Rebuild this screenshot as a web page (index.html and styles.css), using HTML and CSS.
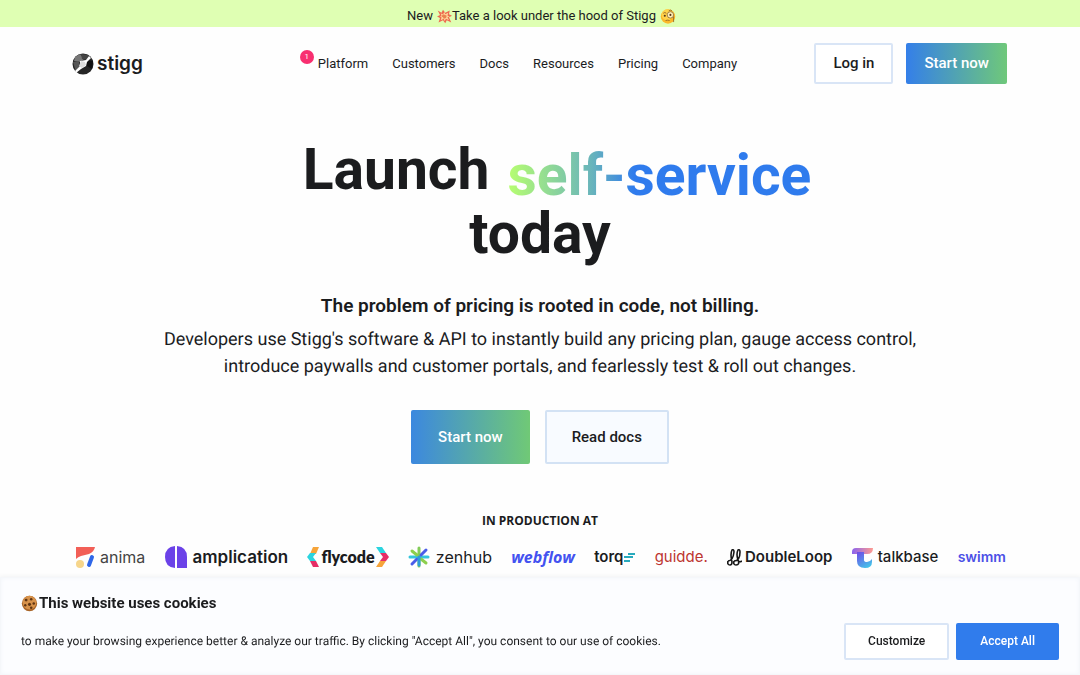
FILE: index.html
```html
<!DOCTYPE html>
<html lang="en">
<head>
<meta charset="utf-8">
<meta name="viewport" content="width=device-width, initial-scale=1">
<title>Stigg</title>
<link rel="stylesheet" href="styles.css">
</head>
<body>
<div class="banner">
  <span>New</span>
  <svg class="emoji emoji-boom" viewBox="0 0 20 20" aria-hidden="true"><path fill="#ee6a50" d="M1 2l5 3 2-4 3 4 6-3-1 5 4 2-4 2 3 7-6-3-2 4-3-4-6 3 2-6-4-2 4-2z"/><path fill="#ffd59a" d="M5 6l3 1 2-3 1 3 4-2-1 4 3 1-3 1 2 4-4-2-2 3-1-3-4 2 1-4-2-1 2-1z"/><path fill="#e9824f" d="M8 7l3 1 2 1-1 3-3 1-1-2-2-1z"/></svg>
  <a class="banner-link" href="#">Take a look under the hood of Stigg</a>
  <svg class="emoji emoji-face" viewBox="0 0 20 20" aria-hidden="true"><circle cx="10" cy="10" r="9" fill="#fbb829"/><circle cx="9" cy="8" r="7" fill="#ffd34a"/><circle cx="13" cy="8" r="4" fill="#fff0b8" stroke="#8b6b35"/><circle cx="13" cy="8" r="1.3" fill="#573718"/><circle cx="6" cy="9" r="1.3" fill="#573718"/><path d="M4 6q2-2 4 0M11 3q2-2 4 0M7 15q3-1 5 0M17 10v7" stroke="#8b5a20" fill="none"/></svg>
</div>

<header class="header">
  <a class="brand" href="#">
    <svg class="brand-mark" viewBox="0 0 22 22" aria-hidden="true"><circle cx="11" cy="11" r="10.5" fill="#252525"/><path d="M3 4l5-3 4 5-4 3-6-1z" fill="#777"/><path d="M9 1l8 1-2 5-5-1z" fill="#444"/><path d="M1 9l6-1 1 7-4 4z" fill="#555"/><path d="M14 7l7 1-1 8-5-3z" fill="#111"/><path d="M8 8l6-1 3-4 2 2-4 4-1 4-5 3-5 4-1-2 5-5z" fill="#fff"/><path d="M9 8l4 1 1 3-4 3-3-2z" fill="#ddd"/></svg>
    <span>stigg</span>
  </a>
  <nav class="nav">
    <a class="nav-link" href="#"><span class="nav-badge">1</span>Platform</a>
    <a class="nav-link" href="#">Customers</a>
    <a class="nav-link" href="#">Docs</a>
    <a class="nav-link" href="#">Resources</a>
    <a class="nav-link" href="#">Pricing</a>
    <a class="nav-link" href="#">Company</a>
  </nav>
  <div class="header-actions">
    <button class="button button-outline" type="button">Log in</button>
    <button class="button button-gradient" type="button">Start now</button>
  </div>
</header>

<main class="hero">
  <h1 class="title"><span class="title-line"><span>Launch</span> <span class="title-accent">self-service</span></span> <span>today</span></h1>
  <h2 class="subtitle">The problem of pricing is rooted in code, not billing.</h2>
  <p class="lead">Developers use Stigg's software &amp; API to instantly build any pricing plan, gauge access control, introduce paywalls and customer portals, and fearlessly test &amp; roll out changes.</p>
  <div class="hero-actions">
    <button class="button button-large button-gradient" type="button">Start now</button>
    <button class="button button-large button-soft" type="button">Read docs</button>
  </div>
  <h3 class="customers-title">IN PRODUCTION AT</h3>
</main>

<section class="customers" aria-label="Customers">
  <div class="logo logo-anima"><svg width="20" height="22" viewBox="0 0 20 22" aria-hidden="true"><path d="M0 1h19q-1 5-6 7-4 1-8 2-3 1-5 3z" fill="#f25f57"/><circle cx="4" cy="18" r="4" fill="#f6d58a"/><path d="M13 19l3-8" stroke="#2f67e8" stroke-width="4" stroke-linecap="round"/></svg><span>anima</span></div>
  <div class="logo logo-amplication"><svg width="22" height="22" viewBox="0 0 22 22" aria-hidden="true"><path d="M10 0v22Q0 21 0 11T10 0zM12 0q10 1 10 11v11H12z" fill="#6b42e8"/></svg><span>amplication</span></div>
  <div class="logo logo-flycode"><svg width="13" height="20" viewBox="0 0 13 20" aria-hidden="true"><path d="M6 0h6L9 7H3z" fill="#f6a43a"/><path d="M3 6h6l-3 4 3 4H3L0 10z" fill="#2bd4df"/><path d="M3 14h6l3 6H6z" fill="#e62d66"/></svg><span>flycode</span><svg width="13" height="20" viewBox="0 0 13 20" aria-hidden="true"><path d="M0 0h6l4 6H4z" fill="#2bd4df"/><path d="M4 6h6l3 4-3 4H4l3-4z" fill="#e62d66"/><path d="M4 14h6l-4 6H0z" fill="#f6a43a"/></svg></div>
  <div class="logo logo-zenhub"><svg width="22" height="22" viewBox="0 0 22 22" aria-hidden="true"><g stroke-width="3" stroke-linecap="round"><path d="M11 2v8M11 12v8" stroke="#83cc58"/><path d="M2 11h7M13 11h7" stroke="#34c5dc"/><path d="M4 5l5 4M13 13l5 4" stroke="#8ccf4d"/><path d="M18 4l-5 5M9 13l-5 5" stroke="#4a5de8"/><path d="M11 11v8" stroke="#2d9cdb"/></g></svg><span>zenhub</span></div>
  <div class="logo logo-webflow"><span>webflow</span></div>
  <div class="logo logo-torq"><span>torq</span><svg width="12" height="12" viewBox="0 0 12 12" aria-hidden="true"><path d="M5 3h7M1 6h9M1 10h6" stroke="#28aabd" stroke-width="2"/></svg></div>
  <div class="logo logo-guidde"><span>guidde.</span></div>
  <div class="logo logo-doubleloop"><svg width="15" height="17" viewBox="0 0 15 17" fill="none" stroke="#161616" stroke-width="1.6" aria-hidden="true"><path d="M1 12q5 0 6-9 0-3-2-2-2 4 0 12 0 3-2 3-3 0-2-4M7 12q6 0 6-9 0-3-2-2-2 4 0 10 2 5-2 5-3 0-2-4M11 11q1 3 4 1"/></svg><span>DoubleLoop</span></div>
  <div class="logo logo-talkbase"><svg width="21" height="21" viewBox="0 0 21 21" aria-hidden="true"><defs><linearGradient id="talkbase-top"><stop stop-color="#8b62ee"/><stop offset="1" stop-color="#ff9b8f"/></linearGradient><linearGradient id="talkbase-stem" x2=".6" y2="1"><stop stop-color="#7048e8"/><stop offset="1" stop-color="#46bfe9"/></linearGradient></defs><path d="M4 1h17q0 6-6 6H0V5q0-4 4-4z" fill="url(#talkbase-top)"/><path d="M5 5h7v8q0 2 3 2t5-3v3q0 6-7 6-8 0-8-7z" fill="url(#talkbase-stem)"/></svg><span>talkbase</span></div>
  <div class="logo logo-swimm"><span>swimm</span></div>
</section>

<aside class="cookies" aria-label="Cookie notice">
  <div class="cookies-text">
    <h4 class="cookies-title"><svg class="emoji" viewBox="0 0 20 20" aria-hidden="true"><circle cx="10" cy="10" r="9" fill="#a96528"/><circle cx="10" cy="9" r="8" fill="#d7924b"/><g fill="#603513"><circle cx="6" cy="6" r="1.7"/><circle cx="12" cy="5" r="1.5"/><circle cx="10" cy="11" r="1.8"/><circle cx="15" cy="10" r="1.5"/><circle cx="5" cy="12" r="1.4"/><circle cx="12" cy="15" r="1.5"/></g></svg>This website uses cookies</h4>
    <p class="cookies-copy">to make your browsing experience better &amp; analyze our traffic. By clicking "Accept All", you consent to our use of cookies.</p>
  </div>
  <div class="cookies-actions">
    <button class="button button-small button-outline" type="button">Customize</button>
    <button class="button button-small button-blue" type="button">Accept All</button>
  </div>
</aside>
</body>
</html>
```
FILE: styles.css
```css
* { box-sizing: border-box; }
body {
  margin: 0;
  min-height: 100vh;
  overflow: hidden;
  background: #fefefe;
  color: #1b1c1e;
  font-family: Roboto, "Liberation Sans", sans-serif;
}
h1, h2, h3, h4, p { margin: 0; }
a { color: inherit; text-decoration: none; }
svg { flex: none; }

.banner {
  display: flex;
  align-items: center;
  justify-content: center;
  padding: 7px 0 2px 3px;
  background: #dfffb3;
  font-size: 13px;
  line-height: 18px;
}
.emoji { width: 17px; height: 17px; }
.emoji-boom { width: 15px; margin-left: 4px; }
.emoji-face { width: 16px; margin-left: 4px; }

.header {
  display: grid;
  grid-template-columns: 1fr auto 1fr;
  align-items: center;
  padding: 16px 73px 0 72px;
}
.brand {
  display: flex;
  align-items: center;
  gap: 3px;
  font: 600 19px/24px Inter, sans-serif;
}
.brand-mark { width: 22px; height: 22px; }
.nav { display: flex; gap: 24px; margin-right: 24px; font-size: 13px; line-height: 20px; }
.nav-link { position: relative; }
.nav-badge {
  position: absolute;
  left: -18px;
  top: -4px;
  width: 14px;
  height: 14px;
  border-radius: 50%;
  background: #f82f70;
  color: #fff;
  font-size: 8px;
  line-height: 14px;
  text-align: center;
}
.header-actions { display: flex; justify-content: flex-end; gap: 13px; }

.button {
  border: 2px solid transparent;
  border-radius: 2px;
  padding: 0 16px;
  color: #fff;
  font: 500 15px/37px Roboto, sans-serif;
  white-space: nowrap;
}
.button-gradient { border: 0; padding: 2px 18px; background: linear-gradient(90deg, #347fe9, #6fc87a); }
.button-outline { border-color: #d9e5f6; padding: 0 17px; background: #fff; color: #1b1c1e; }
.button-soft { border-color: #d3e2f4; background: #f8fbff; color: #1b1c1e; }
.button-blue { border: 0; background: #307cec; }
.button-large { padding: 0 25px; line-height: 50px; }
.button-large.button-gradient { padding: 2px 27px; background: linear-gradient(90deg, #3c88df, #70c976); }
.button-small { padding: 0 22px; font-size: 12px; line-height: 33px; }
.button-small.button-blue { padding: 2px 24px; }

.hero { display: flex; flex-direction: column; align-items: center; text-align: center; }
.title {
  display: flex;
  flex-direction: column;
  align-items: center;
  padding-top: 54px;
  font-size: 57px;
  line-height: 64px;
  font-weight: 700;
}
.title-line { display: flex; gap: 18px; padding-left: 34px; }
.title-accent {
  margin: 6px 0 -6px;
  background: linear-gradient(90deg, #b8ff70, #68b4bc 28%, #2f7bed 42%);
  background-clip: text;
  -webkit-background-clip: text;
  color: transparent;
}
.subtitle { margin-top: 28px; font-size: 19px; line-height: 24px; font-weight: 600; }
.lead { max-width: 760px; margin-top: 8px; font-size: 18px; line-height: 27px; text-rendering: geometricPrecision; }
.hero-actions { display: flex; gap: 15px; margin-top: 30px; }
.customers-title { margin-top: 48px; font: 700 12px/18px "Open Sans", sans-serif; }

.customers {
  display: flex;
  align-items: center;
  justify-content: space-between;
  margin-top: 15px;
  padding: 0 74px 0 76px;
}
.logo { display: flex; align-items: center; height: 24px; font: 500 15px/24px Inter, sans-serif; }
.logo-anima { gap: 4px; font-size: 16px; font-weight: 400; color: #444; }
.logo-amplication { gap: 6px; font-size: 17px; font-weight: 600; }
.logo-flycode { gap: 1px; font: 800 16px/24px Lato, sans-serif; }
.logo-zenhub { gap: 6px; font-size: 16px; font-weight: 400; }
.logo-webflow { color: #4352f0; font: italic 700 16px/24px "Open Sans", sans-serif; }
.logo-torq { font-weight: 600; font-size: 15px; }
.logo-guidde { color: #bd3530; font-weight: 400; }
.logo-doubleloop { gap: 3px; font-weight: 600; }
.logo-talkbase { gap: 5px; font-size: 15px; }
.logo-swimm { color: #4c50e6; font-weight: 600; font-size: 14px; }

.cookies {
  position: fixed;
  inset: auto 0 0;
  display: flex;
  align-items: flex-end;
  justify-content: space-between;
  padding: 13px 20px 14px;
  background: #fcfdff;
  border: 1px solid #f5f7fa;
  box-shadow: 0 0 5px rgba(40, 50, 70, .08), inset 0 0 4px #f2f5fa;
}
.cookies-title { display: flex; align-items: center; gap: 1px; font-size: 15px; line-height: 24px; font-weight: 700; }
.cookies-copy { margin: 16px 0 9px; font-size: 12px; line-height: 20px; text-rendering: geometricPrecision; }
.cookies-actions { display: flex; gap: 7px; }
```
